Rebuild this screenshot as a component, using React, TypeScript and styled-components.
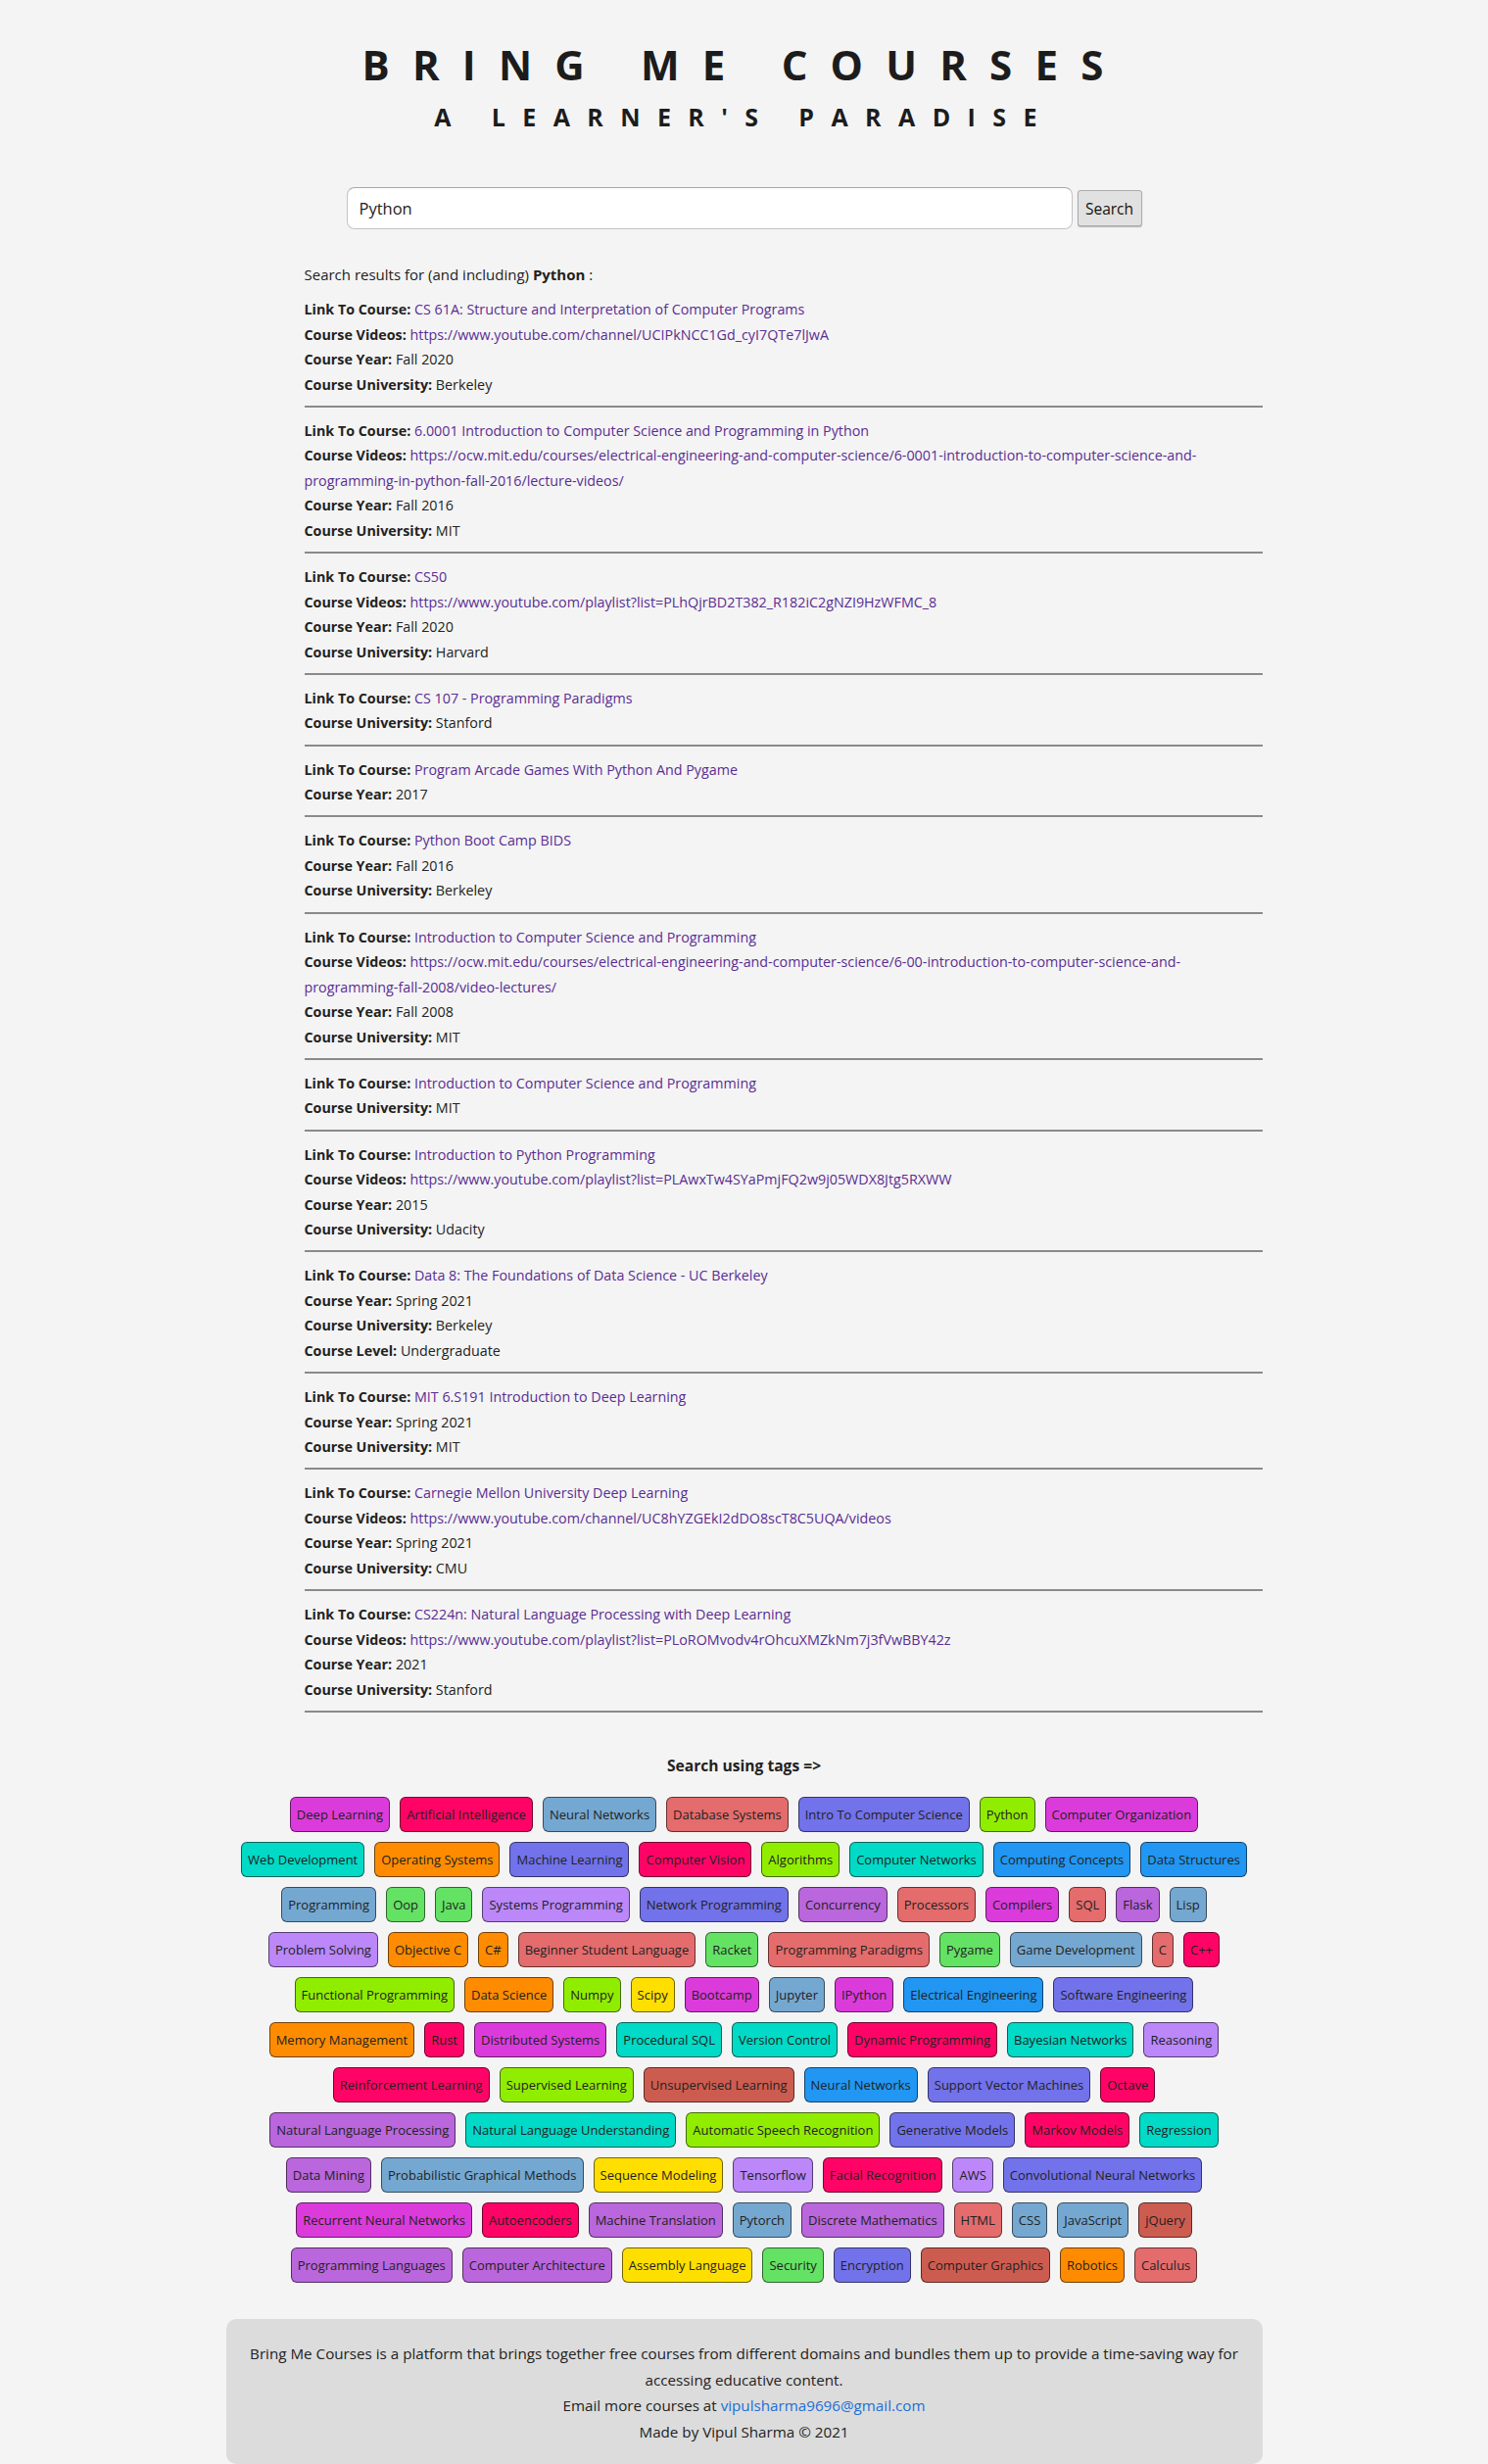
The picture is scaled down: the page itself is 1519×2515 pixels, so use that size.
import React from "react";
import styled, { createGlobalStyle } from "styled-components";

const GlobalStyle = createGlobalStyle`
  html, body {
    margin: 0;
    padding: 0;
    background: #f4f4f4;
  }
  body {
    font-family: "Open Sans", "Noto Sans", Arial, sans-serif;
    color: #222;
  }
  * { box-sizing: border-box; }
`;

const Page = styled.div`
  display: flex;
  flex-direction: column;
  align-items: center;
  padding-top: 41px;
  padding-bottom: 2px;
`;

const Header = styled.header`
  display: flex;
  flex-direction: column;
  align-items: center;
  gap: 14px;
`;

const Title = styled.h1`
  margin: 0;
  font-size: 42px;
  line-height: 50px;
  font-weight: 700;
  letter-spacing: 23.2px;
  color: #1c1c1c;
`;

const Subtitle = styled.h2`
  margin: 0;
  font-size: 25px;
  line-height: 29px;
  font-weight: 700;
  letter-spacing: 17.4px;
  color: #1c1c1c;
`;

const SearchForm = styled.form`
  display: flex;
  align-items: center;
  gap: 5px;
  margin-top: 57px;
`;

const SearchInput = styled.input`
  width: 741px;
  height: 43px;
  padding: 0 12px;
  font-family: "Open Sans", sans-serif;
  font-size: 16.5px;
  color: #222;
  background: #fff;
  border: 1px solid #c4c4c4;
  border-top-color: #a8a8a8;
  border-radius: 8px;
  outline: none;
`;

const SearchButton = styled.button`
  width: 66px;
  height: 37px;
  padding: 0;
  font-family: "Open Sans", sans-serif;
  font-size: 15.5px;
  color: #111;
  background: #e1e1e1;
  border: 1px solid #ababab;
  border-radius: 3px;
  box-shadow: 0 1px 1px rgba(0, 0, 0, 0.25);
`;

const Main = styled.main`
  width: 1058px;
  display: flex;
  flex-direction: column;
`;

const Results = styled.section`
  padding-left: 80px;
  margin-top: 34px;
  font-size: 14.3px;
  line-height: 25.5px;
`;

const Intro = styled.p`
  margin: 0 0 9.5px;
  font-size: 15px;
`;

const Entry = styled.div`
  padding-bottom: 8.75px;
  border-bottom: 2px solid #8a8a8a;
  margin-bottom: 11px;
`;

const Line = styled.div`
  word-break: normal;
`;

const Label = styled.b`
  font-weight: 700;
`;

const CourseLink = styled.a`
  color: #5a2d93;
  text-decoration: none;
`;

const TagsSection = styled.section`
  display: flex;
  flex-direction: column;
  align-items: center;
  padding-top: 31px;
`;

const TagsTitle = styled.h3`
  margin: 0 0 19px;
  font-size: 15.6px;
  line-height: 25.5px;
  font-weight: 700;
`;

const TagRows = styled.div`
  display: flex;
  flex-direction: column;
  align-items: center;
  gap: 10px;
`;

const TagRow = styled.div`
  display: flex;
  justify-content: center;
  gap: 10px;
`;

const Tag = styled.button<{ $bg: string }>`
  height: 36px;
  padding: 0 6px;
  font-family: "Open Sans", sans-serif;
  font-size: 13px;
  color: #222;
  background: ${(p) => p.$bg};
  border: 1px solid rgba(0, 0, 0, 0.55);
  border-radius: 6px;
  white-space: nowrap;
`;

const Footer = styled.footer`
  width: 1058px;
  margin-top: 37px;
  padding: 22px 16px 19px;
  background: #dcdcdc;
  border-radius: 10px;
  text-align: center;
  font-size: 15.2px;
  line-height: 26.6px;
  color: #222;
`;

const FooterLine = styled.p`
  margin: 0;
`;

const Mail = styled.a`
  color: #1a6fd6;
  text-decoration: none;
`;

type Course = {
  link: string;
  videos?: string;
  year?: string;
  university?: string;
  level?: string;
};

const courses: Course[] = [
  {
    link: "CS 61A: Structure and Interpretation of Computer Programs",
    videos: "https://www.youtube.com/channel/UCIPkNCC1Gd_cyI7QTe7lJwA",
    year: "Fall 2020",
    university: "Berkeley",
  },
  {
    link: "6.0001 Introduction to Computer Science and Programming in Python",
    videos:
      "https://ocw.mit.edu/courses/electrical-engineering-and-computer-science/6-0001-introduction-to-computer-science-and-programming-in-python-fall-2016/lecture-videos/",
    year: "Fall 2016",
    university: "MIT",
  },
  {
    link: "CS50",
    videos: "https://www.youtube.com/playlist?list=PLhQjrBD2T382_R182iC2gNZI9HzWFMC_8",
    year: "Fall 2020",
    university: "Harvard",
  },
  { link: "CS 107 - Programming Paradigms", university: "Stanford" },
  { link: "Program Arcade Games With Python And Pygame", year: "2017" },
  { link: "Python Boot Camp BIDS", year: "Fall 2016", university: "Berkeley" },
  {
    link: "Introduction to Computer Science and Programming",
    videos:
      "https://ocw.mit.edu/courses/electrical-engineering-and-computer-science/6-00-introduction-to-computer-science-and-programming-fall-2008/video-lectures/",
    year: "Fall 2008",
    university: "MIT",
  },
  { link: "Introduction to Computer Science and Programming", university: "MIT" },
  {
    link: "Introduction to Python Programming",
    videos: "https://www.youtube.com/playlist?list=PLAwxTw4SYaPmjFQ2w9j05WDX8Jtg5RXWW",
    year: "2015",
    university: "Udacity",
  },
  {
    link: "Data 8: The Foundations of Data Science - UC Berkeley",
    year: "Spring 2021",
    university: "Berkeley",
    level: "Undergraduate",
  },
  { link: "MIT 6.S191 Introduction to Deep Learning", year: "Spring 2021", university: "MIT" },
  {
    link: "Carnegie Mellon University Deep Learning",
    videos: "https://www.youtube.com/channel/UC8hYZGEkI2dDO8scT8C5UQA/videos",
    year: "Spring 2021",
    university: "CMU",
  },
  {
    link: "CS224n: Natural Language Processing with Deep Learning",
    videos: "https://www.youtube.com/playlist?list=PLoROMvodv4rOhcuXMZkNm7j3fVwBBY42z",
    year: "2021",
    university: "Stanford",
  },
];

const C = {
  magenta: "#dc3bdc",
  pink: "#ff0466",
  steel: "#75a8d1",
  salmon: "#e46c6c",
  peri: "#7272ea",
  lime: "#91ed00",
  turq: "#00dac6",
  orange: "#ff8c00",
  blue: "#2196f2",
  green: "#64e264",
  lav: "#bb87f9",
  orchid: "#ba66dc",
  yellow: "#ffdf00",
  brick: "#cd5c50",
};

type T = [string, string];

const tagRows: T[][] = [
  [
    ["Deep Learning", C.magenta],
    ["Artificial Intelligence", C.pink],
    ["Neural Networks", C.steel],
    ["Database Systems", C.salmon],
    ["Intro To Computer Science", C.peri],
    ["Python", C.lime],
    ["Computer Organization", C.magenta],
  ],
  [
    ["Web Development", C.turq],
    ["Operating Systems", C.orange],
    ["Machine Learning", C.peri],
    ["Computer Vision", C.pink],
    ["Algorithms", C.lime],
    ["Computer Networks", C.turq],
    ["Computing Concepts", C.blue],
    ["Data Structures", C.blue],
  ],
  [
    ["Programming", C.steel],
    ["Oop", C.green],
    ["Java", C.green],
    ["Systems Programming", C.lav],
    ["Network Programming", C.peri],
    ["Concurrency", C.orchid],
    ["Processors", C.salmon],
    ["Compilers", C.magenta],
    ["SQL", C.salmon],
    ["Flask", C.orchid],
    ["Lisp", C.steel],
  ],
  [
    ["Problem Solving", C.lav],
    ["Objective C", C.orange],
    ["C#", C.orange],
    ["Beginner Student Language", C.salmon],
    ["Racket", C.green],
    ["Programming Paradigms", C.salmon],
    ["Pygame", C.green],
    ["Game Development", C.steel],
    ["C", C.salmon],
    ["C++", C.pink],
  ],
  [
    ["Functional Programming", C.lime],
    ["Data Science", C.orange],
    ["Numpy", C.lime],
    ["Scipy", C.yellow],
    ["Bootcamp", C.magenta],
    ["Jupyter", C.steel],
    ["IPython", C.magenta],
    ["Electrical Engineering", C.blue],
    ["Software Engineering", C.peri],
  ],
  [
    ["Memory Management", C.orange],
    ["Rust", C.pink],
    ["Distributed Systems", C.magenta],
    ["Procedural SQL", C.turq],
    ["Version Control", C.turq],
    ["Dynamic Programming", C.pink],
    ["Bayesian Networks", C.turq],
    ["Reasoning", C.lav],
  ],
  [
    ["Reinforcement Learning", C.pink],
    ["Supervised Learning", C.lime],
    ["Unsupervised Learning", C.brick],
    ["Neural Networks", C.blue],
    ["Support Vector Machines", C.peri],
    ["Octave", C.pink],
  ],
  [
    ["Natural Language Processing", C.orchid],
    ["Natural Language Understanding", C.turq],
    ["Automatic Speech Recognition", C.lime],
    ["Generative Models", C.peri],
    ["Markov Models", C.pink],
    ["Regression", C.turq],
  ],
  [
    ["Data Mining", C.orchid],
    ["Probabilistic Graphical Methods", C.steel],
    ["Sequence Modeling", C.yellow],
    ["Tensorflow", C.lav],
    ["Facial Recognition", C.pink],
    ["AWS", C.lav],
    ["Convolutional Neural Networks", C.peri],
  ],
  [
    ["Recurrent Neural Networks", C.magenta],
    ["Autoencoders", C.pink],
    ["Machine Translation", C.orchid],
    ["Pytorch", C.steel],
    ["Discrete Mathematics", C.orchid],
    ["HTML", C.salmon],
    ["CSS", C.steel],
    ["JavaScript", C.steel],
    ["jQuery", C.brick],
  ],
  [
    ["Programming Languages", C.orchid],
    ["Computer Architecture", C.orchid],
    ["Assembly Language", C.yellow],
    ["Security", C.green],
    ["Encryption", C.peri],
    ["Computer Graphics", C.brick],
    ["Robotics", C.orange],
    ["Calculus", C.salmon],
  ],
];

function CourseEntry({ c }: { c: Course }) {
  return (
    <Entry>
      <Line>
        <Label>Link To Course:</Label> <CourseLink href="#">{c.link}</CourseLink>
      </Line>
      {c.videos && (
        <Line>
          <Label>Course Videos:</Label> <CourseLink href="#">{c.videos}</CourseLink>
        </Line>
      )}
      {c.year && (
        <Line>
          <Label>Course Year:</Label> {c.year}
        </Line>
      )}
      {c.university && (
        <Line>
          <Label>Course University:</Label> {c.university}
        </Line>
      )}
      {c.level && (
        <Line>
          <Label>Course Level:</Label> {c.level}
        </Line>
      )}
    </Entry>
  );
}

export default function App() {
  return (
    <>
      <GlobalStyle />
      <Page>
        <Header>
          <Title>BRING ME COURSES</Title>
          <Subtitle>A LEARNER'S PARADISE</Subtitle>
        </Header>
        <SearchForm onSubmit={(e) => e.preventDefault()}>
          <SearchInput defaultValue="Python" />
          <SearchButton type="submit">Search</SearchButton>
        </SearchForm>
        <Main>
          <Results>
            <Intro>
              Search results for (and including) <b>Python</b> :
            </Intro>
            {courses.map((c, i) => (
              <CourseEntry key={i} c={c} />
            ))}
          </Results>
          <TagsSection>
            <TagsTitle>Search using tags =&gt;</TagsTitle>
            <TagRows>
              {tagRows.map((row, i) => (
                <TagRow key={i}>
                  {row.map(([name, bg]) => (
                    <Tag key={name} $bg={bg}>
                      {name}
                    </Tag>
                  ))}
                </TagRow>
              ))}
            </TagRows>
          </TagsSection>
        </Main>
        <Footer>
          <FooterLine>
            Bring Me Courses is a platform that brings together free courses from different domains and
            bundles them up to provide a time-saving way for accessing educative content.
          </FooterLine>
          <FooterLine>
            Email more courses at <Mail href="#">vipulsharma9696@gmail.com</Mail>
          </FooterLine>
          <FooterLine>Made by Vipul Sharma © 2021</FooterLine>
        </Footer>
      </Page>
    </>
  );
}
